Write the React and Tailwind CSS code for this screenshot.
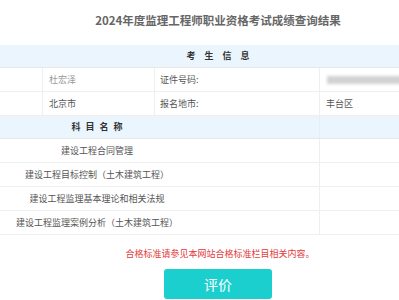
// Exam score query result page: candidate info table, subject list, note and rating button
const infoRows = [
  { value: "杜宏泽", label: "证件号码:", extra: null, muted: true },
  { value: "北京市", label: "报名地市:", extra: "丰台区", muted: false },
];

const subjects = [
  "建设工程合同管理",
  "建设工程目标控制（土木建筑工程）",
  "建设工程监理基本理论和相关法规",
  "建设工程监理案例分析（土木建筑工程）",
];

const App = () => {
  return (
    <div
      className="w-[399px] h-[300px] overflow-hidden bg-white"
      style={{ fontFamily: '"Noto Sans CJK SC", "Noto Sans", sans-serif' }}
    >
      {/* Wide page body, cropped by the viewport */}
      <div className="ml-[-125px] w-[686px] flex flex-col">
        {/* Title */}
        <div className="h-[45px] flex items-center justify-center pb-[3px]">
          <h1 className="text-[11.5px] font-semibold text-[#666] leading-none">
            2024年度监理工程师职业资格考试成绩查询结果
          </h1>
        </div>

        {/* Candidate info header */}
        <div className="h-[23px] bg-[#eaf5fd] border-b border-[#e8e8e8] flex items-center justify-center">
          <span className="text-[9px] font-bold text-[#333] tracking-[9px] pl-[9px]">考生信息</span>
        </div>

        {/* Candidate info rows */}
        {infoRows.map((row, i) => (
          <div key={i} className="h-[24px] flex border-b border-[#efefef] text-[9px] text-[#555]">
            <div className="w-[168px] border-r border-[#efefef]" />
            <div className={`w-[112px] border-r border-[#efefef] flex items-center pl-[6px] ${row.muted ? "text-[#999]" : ""}`}>
              {row.value}
            </div>
            <div className="w-[165px] border-r border-[#efefef] flex items-center pl-[5px]">{row.label}</div>
            <div className="flex-1 flex items-center pl-[6px]">
              {row.extra ? (
                row.extra
              ) : (
                <div className="h-[8px] w-[110px] ml-[1px] bg-[#d2d2d2] blur-[1.5px]" />
              )}
            </div>
          </div>
        ))}

        {/* Subject header */}
        <div className="h-[23px] flex bg-[#eaf5fd] border-b border-[#e8e8e8]">
          <div className="w-[445px] border-r border-[#e4eef5] flex items-center justify-center">
            <span className="text-[9px] font-bold text-[#333] tracking-[5px] pl-[5px]">科目名称</span>
          </div>
          <div className="flex-1" />
        </div>

        {/* Subject rows */}
        {subjects.map((name, i) => (
          <div key={i} className="h-[24px] flex border-b border-[#efefef] text-[9px] text-[#555]">
            <div className="w-[445px] border-r border-[#efefef] flex items-center justify-center">{name}</div>
            <div className="flex-1" />
          </div>
        ))}

        {/* Note */}
        <div className="mt-[13px] text-center text-[9px] leading-[12px] text-[#e23b3b] pl-[4px]">
          合格标准请参见本网站合格标准栏目相关内容。
        </div>

        {/* Rating button */}
        <div className="mt-[9px] flex justify-center">
          <button className="w-[108px] h-[30px] rounded-[3px] bg-[#1ccfcf] text-white text-[14px] leading-none">
            评价
          </button>
        </div>
      </div>
    </div>
  );
};

export default App;
